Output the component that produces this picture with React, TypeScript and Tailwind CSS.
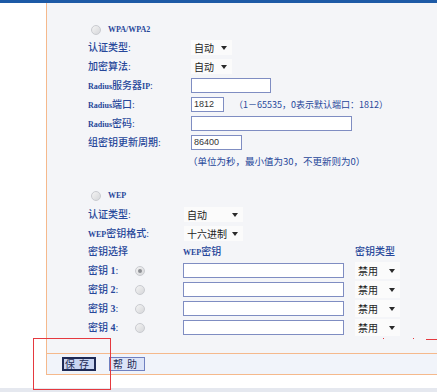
import type { ReactNode } from 'react';

const font = "font-['Liberation_Serif','Noto_Sans_CJK_SC',serif]";
const cjk = "font-['Noto_Sans_CJK_SC','Liberation_Sans',sans-serif]";

function Radio({ checked = false }: { checked?: boolean }) {
  return (
    <span className="inline-flex h-[10px] w-[10px] items-center justify-center rounded-full border border-[#c9cbd0] bg-gradient-to-br from-[#f4f4f4] to-[#d6d7da]">
      {checked && <span className="h-[4px] w-[4px] rounded-full bg-[#8d8f94]" />}
    </span>
  );
}

function Select({ text, width }: { text: string; width: string }) {
  return (
    <div className={`flex h-[15px] items-center justify-between bg-[#fbfbfb] pl-[3px] pr-[5px] ${width}`}>
      <span className={`${cjk} text-[10px] leading-none text-[#222]`}>{text}</span>
      <span className="h-0 w-0 border-x-[3px] border-t-[4px] border-x-transparent border-t-[#2a2a2a]" />
    </div>
  );
}

function Input({ width, value }: { width: string; value?: string }) {
  return (
    <div className={`flex h-[15px] items-center border border-[#7f8dc2] bg-white px-[2px] ${width}`}>
      <span className="font-['Liberation_Sans',sans-serif] text-[9px] leading-none text-[#333]">{value}</span>
    </div>
  );
}

function Row({ label, children, h = 'h-[19px]', col = 'w-[103px]' }: { label: ReactNode; children?: ReactNode; h?: string; col?: string }) {
  return (
    <div className={`flex items-center ${h}`}>
      <div className={`${col} ${font} shrink-0 text-[10px] font-medium leading-none text-[#27479a]`}>{label}</div>
      {children}
    </div>
  );
}

export default function App() {
  return (
    <div className="relative flex h-[392px] w-[437px] flex-col overflow-hidden bg-white">
      <div className="h-[3px] bg-[#1d5aa6]" />
      <div className="flex h-[372px]">
        <div className="w-[46px] bg-white" />
        <div className="flex flex-1 flex-col border-l border-[#f5b98c] bg-[#f4f5f8]">
          <div className="flex-1 border-b border-[#f5b98c] pl-[41px] pt-[18px]">
            <div className="flex h-[17px] items-center gap-[7px] pl-[3px]">
              <Radio />
              <span className={`${font} text-[8px] font-bold text-[#27479a]`}>WPA/WPA2</span>
            </div>
            <Row label="认证类型:"><Select text="自动" width="w-[41px]" /></Row>
            <Row label="加密算法:"><Select text="自动" width="w-[41px]" /></Row>
            <Row label={<><span className="text-[8px] font-bold">Radius</span>服务器<span className="text-[8px] font-bold">IP</span>:</>}>
              <Input width="w-[80px]" />
            </Row>
            <Row label={<><span className="text-[8px] font-bold">Radius</span>端口:</>}>
              <Input width="w-[33px]" value="1812" />
              <span className={`${cjk} ml-[10px] text-[9px] leading-none text-[#27479a]`}>（1－65535，0表示默认端口：1812）</span>
            </Row>
            <Row label={<><span className="text-[8px] font-bold">Radius</span>密码:</>}>
              <Input width="w-[161px]" />
            </Row>
            <Row label="组密钥更新周期:"><Input width="w-[51px]" value="86400" /></Row>
            <Row label="">
              <span className={`${cjk} -ml-[3px] text-[9.5px] leading-none text-[#27479a]`}>（单位为秒，最小值为30，不更新则为0）</span>
            </Row>

            <div className="mt-[16px] flex h-[18px] items-center gap-[7px] pl-[3px]">
              <Radio />
              <span className={`${font} text-[8px] font-bold text-[#27479a]`}>WEP</span>
            </div>
            <Row label="认证类型:" col="w-[96px]"><Select text="自动" width="w-[59px]" /></Row>
            <Row label={<><span className="text-[8px] font-bold">WEP</span>密钥格式:</>} col="w-[96px]">
              <Select text="十六进制" width="w-[59px]" />
            </Row>
            <Row label="密钥选择" col="w-[95px]" h="h-[18px]">
              <span className={`${font} w-[172px] text-[10px] font-medium leading-none text-[#27479a]`}>
                <span className="text-[8px] font-bold">WEP</span>密钥
              </span>
              <span className={`${font} text-[10px] font-medium leading-none text-[#27479a]`}>密钥类型</span>
            </Row>
            {[1, 2, 3, 4].map((n) => (
              <Row key={n} label={<>密钥 <span className="font-bold">{n}</span>:</>} col="w-[47px]">
                <div className="flex w-[48px]">
                  <Radio checked={n === 1} />
                </div>
                <Input width="w-[161px]" />
                <div className="ml-[11px]">
                  <Select text="禁用" width="w-[45px] h-[17px]" />
                </div>
              </Row>
            ))}
          </div>
          <div className="flex h-[21px] items-center gap-[13px] border-b border-[#f5b98c] bg-[#f1f4fa] pl-[15px]">
            <button className={`${cjk} flex h-[14px] w-[34px] items-center justify-center border-2 border-[#1e2a55] bg-[#c9d5f1] text-[10px] leading-none tracking-[4px] text-[#1e2a55]`}>
              保存
            </button>
            <button className={`${cjk} flex h-[14px] w-[36px] items-center justify-center border border-[#6f80c0] bg-[#dce4f8] text-[10px] leading-none tracking-[4px] text-[#1e2a55]`}>
              帮助
            </button>
          </div>
        </div>
      </div>
      <div className="h-[13px] bg-white" />
      <div className="flex-1 bg-[#e5e8ef]" />

      <div className="absolute left-[33px] top-[338px] h-[52px] w-[78px] border border-[#e5393f]" />
      <div className="absolute left-[383px] top-[338px] h-[1px] w-[1px] bg-[#e5393f]" />
      <div className="absolute left-[413px] top-[338px] h-[1px] w-[1px] bg-[#e5393f]" />
      <div className="absolute left-[426px] top-[339px] h-[1px] w-[11px] bg-[#e5393f]" />
    </div>
  );
}
